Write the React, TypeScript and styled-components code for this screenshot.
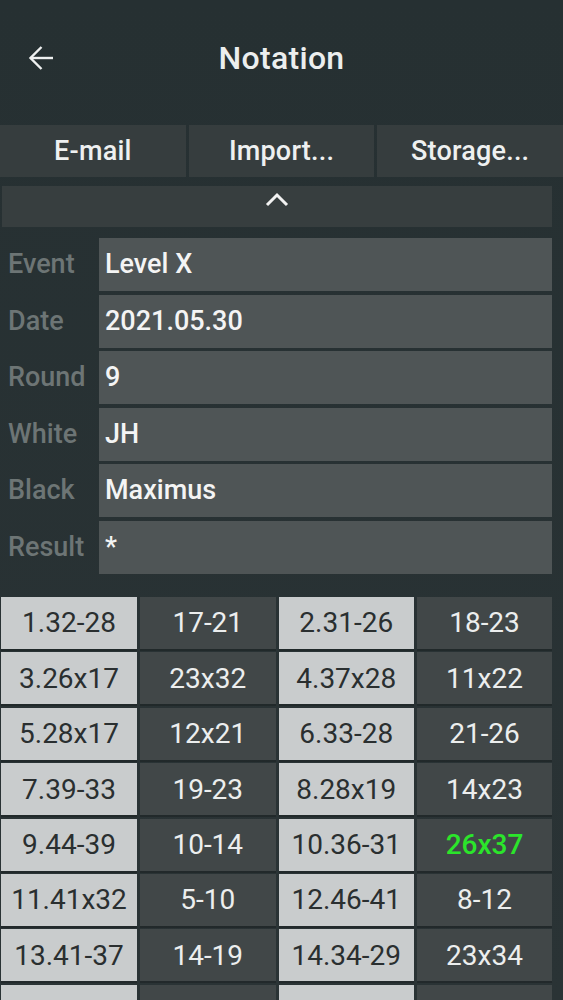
import React from "react";
import styled, { createGlobalStyle } from "styled-components";

const Global = createGlobalStyle`
  html, body { margin: 0; padding: 0; background: #283133; }
  body { font-family: Roboto, "Noto Sans", sans-serif; overflow: hidden; }
`;

const Page = styled.div`
  width: 563px;
  height: 1000px;
  background: linear-gradient(180deg, #263032 0%, #2a3335 100%);
  display: flex;
  flex-direction: column;
  overflow: hidden;
  & > * { flex-shrink: 0; }
`;

const Header = styled.header`
  height: 115px;
  display: grid;
  grid-template-columns: 80px 1fr 80px;
  align-items: center;
`;

const BackButton = styled.div`
  padding-left: 28px;
  display: flex;
  align-items: center;
  color: #eef0f0;
`;

const Title = styled.h1`
  margin: 0;
  text-align: center;
  color: #eceeee;
  font-size: 32px;
  font-weight: 500;
  letter-spacing: 0.3px;
`;

const ButtonRow = styled.div`
  margin-top: 10px;
  display: flex;
  gap: 3px;
  height: 52px;
`;

const ActionButton = styled.div`
  flex: 1;
  background: #363d3e;
  color: #eef0f0;
  font-size: 27px;
  font-weight: 500;
  letter-spacing: 0.2px;
  display: flex;
  align-items: center;
  justify-content: center;
`;

const CollapseBar = styled.div`
  margin: 9px 0 0 2px;
  width: 550px;
  height: 41px;
  background: #373e3f;
  display: flex;
  justify-content: center;
  padding-top: 5px;
  box-sizing: border-box;
  color: #f2f2f2;
`;

const Fields = styled.div`
  margin-top: 11px;
  display: grid;
  grid-template-columns: 99px 453px;
  grid-auto-rows: 53px;
  row-gap: 3.6px;
`;

const Label = styled.div`
  color: #6d7575;
  font-size: 27px;
  font-weight: 500;
  padding-left: 8px;
  display: flex;
  align-items: center;
  padding-bottom: 1px;
`;

const Value = styled.div`
  background: #4f5556;
  color: #f4f4f4;
  font-size: 27px;
  font-weight: 500;
  padding-left: 6px;
  display: flex;
  align-items: center;
  padding-bottom: 1px;
`;

const Moves = styled.div`
  margin: 23px 0 0 1px;
  display: grid;
  grid-template-columns: 136px 135.5px 135.5px 135px;
  grid-auto-rows: 52px;
  column-gap: 3px;
  row-gap: 3.4px;
`;

const Cell = styled.div<{ $light: boolean; $active?: boolean }>`
  background: ${(p) => (p.$light ? "#c9cccd" : "#414748")};
  color: ${(p) => (p.$active ? "#2be52b" : p.$light ? "#2a2f30" : "#eceeee")};
  box-shadow: 0 2px 0 rgba(0, 0, 0, 0.18);
  font-size: 28px;
  font-weight: ${(p) => (p.$active ? 500 : 400)};
  display: flex;
  align-items: center;
  justify-content: center;
  white-space: nowrap;
`;

const fields: [string, string][] = [
  ["Event", "Level X"],
  ["Date", "2021.05.30"],
  ["Round", "9"],
  ["White", "JH"],
  ["Black", "Maximus"],
  ["Result", "*"],
];

const moves: string[][] = [
  ["1.32-28", "17-21", "2.31-26", "18-23"],
  ["3.26x17", "23x32", "4.37x28", "11x22"],
  ["5.28x17", "12x21", "6.33-28", "21-26"],
  ["7.39-33", "19-23", "8.28x19", "14x23"],
  ["9.44-39", "10-14", "10.36-31", "26x37"],
  ["11.41x32", "5-10", "12.46-41", "8-12"],
  ["13.41-37", "14-19", "14.34-29", "23x34"],
  ["", "", "", ""],
];

export default function App() {
  return (
    <Page>
      <Global />
      <Header>
        <BackButton>
          <svg width="26" height="26" viewBox="0 0 26 26" fill="none" stroke="currentColor" strokeWidth="2.4">
            <path d="M25 13H2.5" />
            <path d="M13.5 2L2.5 13l11 11" />
          </svg>
        </BackButton>
        <Title>Notation</Title>
        <div />
      </Header>
      <ButtonRow>
        <ActionButton>E-mail</ActionButton>
        <ActionButton>Import...</ActionButton>
        <ActionButton>Storage...</ActionButton>
      </ButtonRow>
      <CollapseBar>
        <svg width="26" height="18" viewBox="0 0 26 18" fill="none" stroke="currentColor" strokeWidth="3">
          <path d="M3 14l10-10 10 10" />
        </svg>
      </CollapseBar>
      <Fields>
        {fields.map(([k, v]) => (
          <React.Fragment key={k}>
            <Label>{k}</Label>
            <Value>{v}</Value>
          </React.Fragment>
        ))}
      </Fields>
      <Moves>
        {moves.map((row, r) =>
          row.map((m, c) => (
            <Cell key={`${r}-${c}`} $light={c % 2 === 0} $active={m === "26x37"}>
              {m}
            </Cell>
          ))
        )}
      </Moves>
    </Page>
  );
}
